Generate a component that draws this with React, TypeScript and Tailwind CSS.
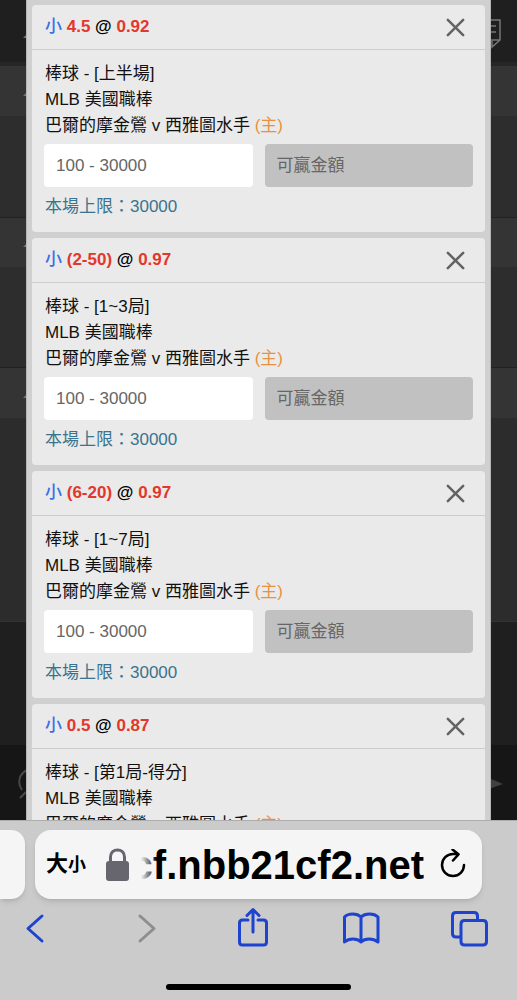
import { X } from "lucide-react";

type Bet = {
	id: string;
	line: string;
	odds: string;
	period: string;
};

const bets: Bet[] = [
	{ id: "bet-1", line: "4.5", odds: "0.92", period: "上半場" },
	{ id: "bet-2", line: "(2-50)", odds: "0.97", period: "1~3局" },
	{ id: "bet-3", line: "(6-20)", odds: "0.97", period: "1~7局" },
	{ id: "bet-4", line: "0.5", odds: "0.87", period: "第1局-得分" },
];

const BetCard = ({ bet }: { bet: Bet }) => {
	return (
		<li className="shrink-0 rounded bg-[#eaeaea] pb-3">
			<div className="flex h-[45px] items-center justify-between border-b border-[#cdcdcd] pr-[17px] pl-[13px]">
				<h3 className="font-bold text-black">
					<span className="font-medium text-[#3a70e6]">小</span>{" "}
					<span className="text-[#e2382c]">{bet.line}</span> @{" "}
					<span className="text-[#e2382c]">{bet.odds}</span>
				</h3>
				<button type="button" aria-label="移除" className="text-[#636363]">
					<X size={25} strokeWidth={2} viewBox="3 3 18 18" className="p-px" />
				</button>
			</div>
			<div className="pt-[11px]">
				<div className="px-[13px]">
					<p>棒球 - [{bet.period}]</p>
					<p>MLB 美國職棒</p>
					<p className="whitespace-nowrap">
						巴爾的摩金鶯 v 西雅圖水手 <span className="text-[#e8913f]">(主)</span>
					</p>
				</div>
				<div className="mt-[5px] mb-[7px] flex gap-3 px-3">
					<input
						type="text"
						id={bet.id}
						aria-label="投注金額"
						placeholder="100 - 30000"
						className="h-[43px] min-w-0 flex-1 rounded bg-white px-3 placeholder:text-[#666]"
					/>
					<input
						type="text"
						aria-label="可贏金額"
						placeholder="可贏金額"
						disabled
						className="h-[43px] min-w-0 flex-1 rounded bg-[#c1c1c1] px-3 placeholder:text-[#666]"
					/>
				</div>
				<p className="px-[13px] text-[#39738f]">本場上限：30000</p>
			</div>
		</li>
	);
};

// Dimmed page that shows on both sides of the bet slip
const Backdrop = () => {
	return (
		<div className="absolute inset-0 flex flex-col bg-[#161616]" aria-hidden="true">
			<div className="h-[62px] bg-[#1f1f1f]" />
			<div className="box-content h-[50px] border-t-4 border-[#262626] bg-[#343434]" />
			<div className="h-[101px] bg-[#2d2d2d]" />
			<div className="h-[50px] border-t border-[#222] bg-[#343434]" />
			<div className="h-[100px] bg-[#2d2d2d]" />
			<div className="h-[51px] border-t border-[#222] bg-[#343434]" />
			<div className="h-[203px] bg-[#2c2c2c]" />
			<div className="h-[124px] border-t border-[#333] bg-[#1f1f1f]" />
			<svg
				className="absolute top-[18px] right-[16px]"
				width="22"
				height="32"
				viewBox="0 0 22 32"
				fill="none"
				stroke="#777"
				strokeWidth="1.5"
			>
				<path d="M0 2H21V22L13 29V22H21M4 8H17M4 14H17" />
			</svg>
			<svg
				className="absolute top-[765px] left-[18px]"
				width="30"
				height="36"
				viewBox="0 0 30 36"
				fill="none"
				stroke="#484848"
				strokeWidth="2"
			>
				<path d="M9 5C1 9-1 18 4 25M2 33L8 27" />
			</svg>
			<svg
				className="absolute top-[778px] right-[14px]"
				width="14"
				height="11"
				viewBox="0 0 14 11"
				fill="#404040"
			>
				<path d="M0 0L14 6L0 11Z" />
			</svg>
			<svg
				className="absolute top-[34px] left-[23px]"
				width="4"
				height="366"
				viewBox="0 0 4 366"
				fill="#777"
			>
				<path d="M0 4L3 1V4ZM0 62L3 59V62ZM0 213L3 210V213ZM0 364L3 361V364Z" />
			</svg>
		</div>
	);
};

const AddressBar = () => {
	return (
		<div className="flex gap-[10px] pr-[35px]">
			<div className="h-[69px] w-[25px] shrink-0 rounded-r-[14px] bg-[#f5f5f5] shadow-md" />
			<div className="flex h-[69px] min-w-0 flex-1 items-center rounded-[16px] bg-[#f5f5f5] pr-4 pl-[11px] text-black shadow-md">
				<button
					type="button"
					aria-label="網頁設定"
					className="flex shrink-0 items-baseline font-bold"
				>
					<span className="text-[22px]">大</span>
					<span className="text-[18px]">小</span>
				</button>
				<svg
					className="ml-5 shrink-0"
					width="23"
					height="34"
					viewBox="0 0 23 34"
					role="img"
					aria-label="安全連線"
				>
					<rect x="0" y="13" width="23" height="20" rx="3" fill="#67666e" />
					<path
						d="M4.500 15V9C4.500 -0.500 18.500 -0.500 18.500 9V15"
						fill="none"
						stroke="#67666e"
						strokeWidth="3"
					/>
				</svg>
				<div className="relative ml-3 flex h-[50px] min-w-0 flex-1 items-center justify-end overflow-hidden">
					<span className="text-[40px] font-bold whitespace-nowrap">cf.nbb21cf2.net</span>
					<span className="absolute inset-y-0 left-0 w-4 bg-linear-to-r from-[#f5f5f5] to-[#f5f5f5]/0" />
				</div>
				<button type="button" aria-label="重新載入" className="ml-4 shrink-0">
					<svg
						width="26"
						height="32"
						viewBox="0 0 26 32"
						fill="none"
						stroke="currentColor"
						strokeWidth="2.500"
						strokeLinecap="round"
						strokeLinejoin="round"
					>
						<path d="M24 16A11 11 0 1 1 13 5H18M12.500 0.500L18.500 5.300L13 11.500" />
					</svg>
				</button>
			</div>
		</div>
	);
};

const tools = [
	{ label: "上一頁", color: "text-[#1d43cf]", path: "M28 9L14 21.500L28 34" },
	{ label: "下一頁", color: "text-[#8e8e8e]", path: "M18 9L32 21.500L18 34" },
	{
		label: "分享",
		color: "text-[#1d43cf]",
		path: "M17 13H11.500Q8.500 13 8.500 16V35Q8.500 38 11.500 38H32.500Q35.500 38 35.500 35V16Q35.500 13 32.500 13H27M22 25V3M16 8.500L22 2.500L28 8.500",
	},
	{
		label: "書籤",
		color: "text-[#1d43cf]",
		path: "M22 10C18 6 9 6 5.500 10V35C10 31 18 31 22 35C26 31 34 31 39 35V10C35 6 26 6 22 10V35",
	},
	{
		label: "分頁",
		color: "text-[#1d43cf]",
		path: "M14 30H9Q5.500 30 5.500 26.500V9Q5.500 5.500 9 5.500H27Q30.500 5.500 30.500 9V13M17.500 13.500H36Q39.500 13.500 39.500 17V34.500Q39.500 38 36 38H17.500Q14 38 14 34.500V17Q14 13.500 17.500 13.500Z",
	},
];

const BrowserBar = () => {
	return (
		<footer className="shrink-0 border-t border-[#aeaeae] bg-[#cbcbcb] pt-[9px] pb-[10px]">
			<AddressBar />
			<nav className="mt-2 flex justify-between pr-[26px] pl-[14px]">
				{tools.map((tool) => (
					<button key={tool.label} type="button" aria-label={tool.label} className={tool.color}>
						<svg
							width="44"
							height="44"
							viewBox="0 0 44 44"
							fill="none"
							stroke="currentColor"
							strokeWidth="3"
							strokeLinecap="round"
							strokeLinejoin="round"
						>
							<path d={tool.path} />
						</svg>
					</button>
				))}
			</nav>
			<div className="mx-auto mt-[33px] h-[6px] w-[185px] rounded-full bg-black" />
		</footer>
	);
};

const App = () => {
	return (
		<div className="flex h-screen flex-col overflow-hidden font-['Liberation_Sans','Noto_Sans_CJK_TC',sans-serif] text-[17px] leading-[26px] text-[#111]">
			<main className="relative min-h-0 flex-1 overflow-hidden">
				<Backdrop />
				<section className="relative mx-[26px] h-full overflow-hidden border-x border-[#b5b5b5] bg-[#d0d0d0] px-[5px] pt-[5px]">
					<ul className="flex flex-col gap-[6px]">
						{bets.map((bet) => (
							<BetCard key={bet.id} bet={bet} />
						))}
					</ul>
				</section>
			</main>
			<BrowserBar />
		</div>
	);
};

export default App;
